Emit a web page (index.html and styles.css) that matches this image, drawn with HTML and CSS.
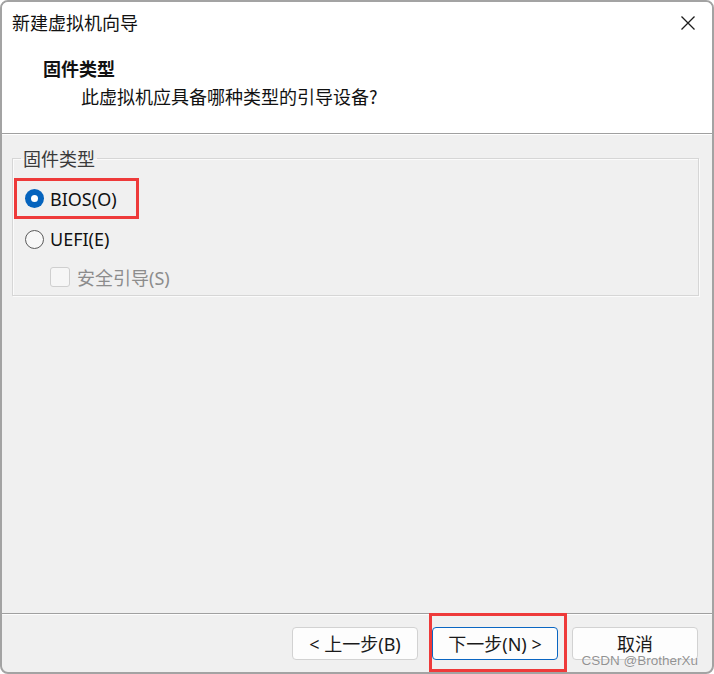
FILE: index.html
```html
<!DOCTYPE html>
<html lang="zh-CN">
<head>
<meta charset="utf-8">
<title>新建虚拟机向导</title>
<link rel="stylesheet" href="styles.css">
</head>
<body>
<div class="window">
  <div class="titlebar">
    <span class="title">新建虚拟机向导</span>
    <svg class="close" width="14" height="14" viewBox="0 0 14 14"><path d="M0.5 0.5 L13.5 13.5 M13.5 0.5 L0.5 13.5" stroke="#1c1c1c" stroke-width="1.3" fill="none"/></svg>
  </div>
  <div class="header">
    <div class="h-title">固件类型</div>
    <div class="h-sub">此虚拟机应具备哪种类型的引导设备?</div>
  </div>
  <div class="content">
    <fieldset class="group">
      <legend>固件类型</legend>
      <div class="opt hl"><span class="radio checked"></span><span>BIOS(O)</span></div>
      <div class="opt row2"><span class="radio"></span><span>UEFI(E)</span></div>
      <div class="opt row3 disabled"><span class="check"></span><span>安全引导(S)</span></div>
    </fieldset>
  </div>
  <div class="footer">
    <button class="btn">&lt; 上一步(B)</button>
    <button class="btn primary">下一步(N) &gt;</button>
    <button class="btn cancel"><span class="btn-label">取消</span></button>
  </div>
  <div class="watermark">CSDN @BrotherXu</div>
</div>
</body>
</html>
```

FILE: styles.css
```css
* { box-sizing: border-box; }
html, body { margin: 0; padding: 0; background: #ffffff; }
body {
  font-family: "Noto Sans", "Noto Sans CJK SC", sans-serif;
  font-size: 18px;
  color: #1a1a1a;
}
.window {
  position: relative;
  width: 714px;
  height: 674px;
  border: 2px solid #a3a3a3;
  border-radius: 8px;
  background: #f0f0f0;
  display: flex;
  flex-direction: column;
  overflow: hidden;
}
.titlebar {
  height: 40px;
  background: #ffffff;
  display: flex;
  align-items: center;
  justify-content: space-between;
  padding: 0 17px 0 10px;
}
.title {
  font-family: "Noto Sans CJK SC", sans-serif;
  font-size: 18px;
  line-height: 40px;
  color: #111;
}
.close { display: block; margin-top: 1px; }
.header {
  background: #ffffff;
  border-bottom: 1px solid #a0a0a0;
  padding: 13px 0 23px 41px;
  height: 92px;
}
.h-title {
  font-family: "Noto Sans CJK SC", sans-serif;
  font-weight: 700;
  font-size: 18px;
  line-height: 26px;
  color: #111;
}
.h-sub {
  font-family: "Noto Sans CJK SC", sans-serif;
  font-size: 18px;
  line-height: 26px;
  margin-top: 2px;
  padding-left: 38px;
  color: #111;
}
.content {
  flex: 1;
  border-top: 1px solid #ffffff;
  padding: 12px 13px 0 10px;
}
.group {
  margin: 0;
  padding: 0;
  border: 1px solid #d6d6d6;
  box-shadow: inset 1px 1px 0 #fbfbfb, 1px 1px 0 #fbfbfb;
  min-width: 0;
}
.group legend {
  margin-left: 8px;
  padding: 0 2px;
  font-family: "Noto Sans CJK SC", sans-serif;
  font-size: 18px;
  line-height: 22px;
  color: #3a3a3a;
}
.opt {
  display: flex;
  align-items: center;
  font-size: 18px;
  color: #111;
}
.hl {
  margin: 9px 0 0 1px;
  width: 125px;
  height: 41px;
  border: 3px solid #ee3a3a;
  padding-left: 8px;
  gap: 6px;
}
.row2 {
  height: 38px;
  margin-top: 1px;
  padding-left: 12px;
  gap: 6px;
}
.row3 {
  height: 37px;
  padding-left: 37px;
  gap: 7px;
}
.radio {
  width: 19px;
  height: 19px;
  border-radius: 50%;
  border: 1px solid #5a5a5a;
  background: #f7f7f7;
  flex: none;
  position: relative;
}
.radio.checked {
  border: none;
  background: #0563bd;
}
.radio.checked::after {
  content: "";
  position: absolute;
  left: 6px;
  top: 6px;
  width: 7px;
  height: 7px;
  border-radius: 50%;
  background: #ffffff;
}
.check {
  width: 20px;
  height: 20px;
  border: 1px solid #cfcfcf;
  border-radius: 3px;
  background: #f6f6f6;
  flex: none;
}
.disabled { color: #8c8c8c; }
.footer {
  height: 59px;
  border-top: 1px solid #a0a0a0;
  box-shadow: inset 0 1px 0 #fdfdfd;
  display: flex;
  justify-content: flex-end;
  align-items: flex-start;
  gap: 14px;
  padding: 13px 14px 0 0;
}
.btn {
  position: relative;
  width: 126px;
  height: 33px;
  border: 1px solid #d2d2d2;
  border-radius: 4px;
  background: #fdfdfd;
  font-family: "Noto Sans", "Noto Sans CJK SC", sans-serif;
  font-size: 18px;
  line-height: 1;
  color: #1a1a1a;
  padding: 0;
}
.btn-label {
  display: inline-block;
  line-height: 18px;
  height: 18px;
}
.btn.primary {
  border-color: #0a66c2;
}
.btn.primary::after {
  content: "";
  position: absolute;
  left: -4px;
  top: -15px;
  right: -10px;
  bottom: -13px;
  border: 3px solid #ee3a3a;
}
.watermark {
  position: absolute;
  right: 14px;
  bottom: 5px;
  font-family: "Liberation Sans", Arial, sans-serif;
  font-size: 13.5px;
  line-height: 13px;
  color: rgba(110, 110, 110, 0.75);
  text-shadow: 0 0 1px #fff;
}
```
